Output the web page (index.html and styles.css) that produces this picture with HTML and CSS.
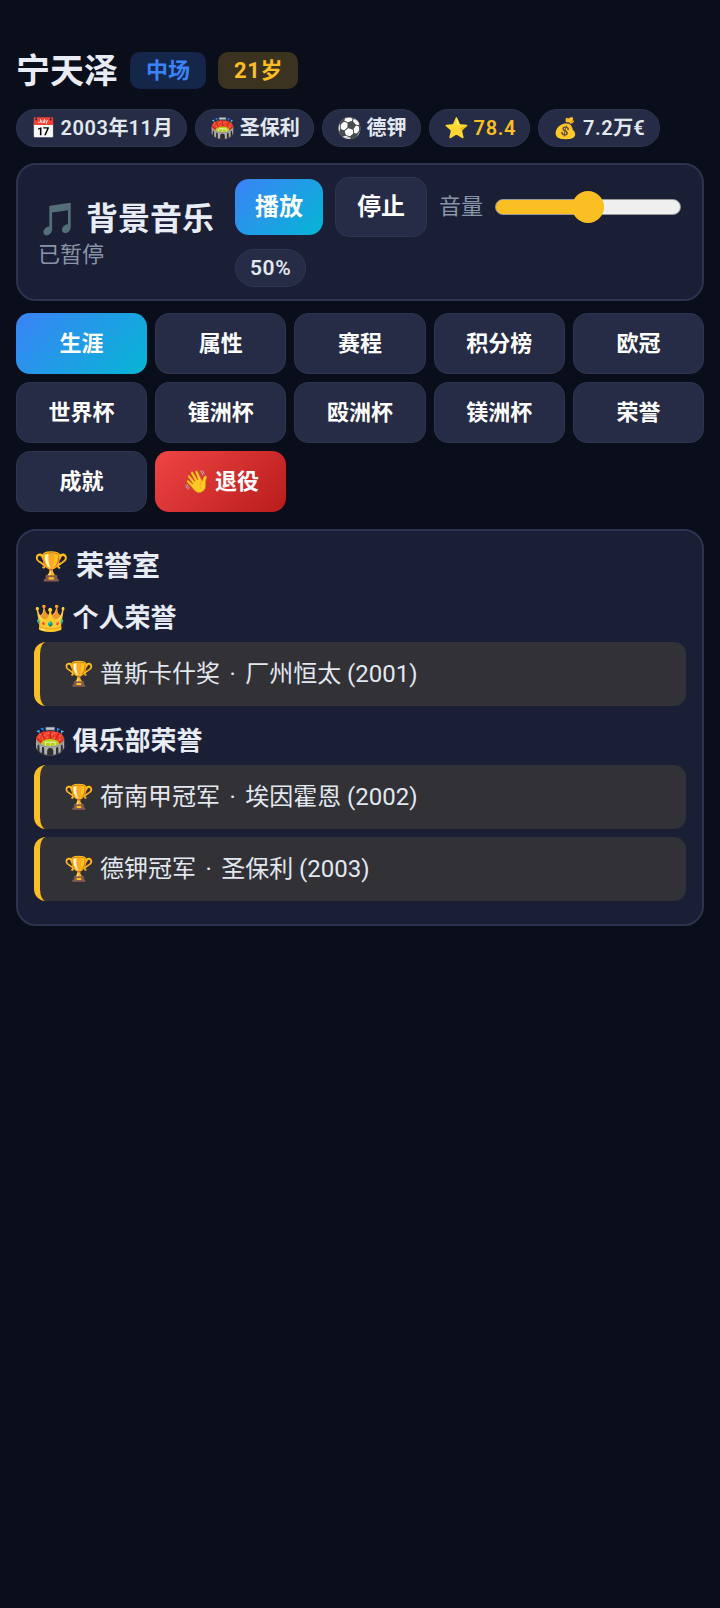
FILE: index.html
```html
<!DOCTYPE html>
<html lang="zh-CN">
<head>
    <meta charset="UTF-8">
    <meta name="viewport" content="width=device-width, initial-scale=1.0">
    <title>宁天泽</title>
    <link rel="stylesheet" href="styles.css">
</head>
<body>
    <div class="container">
        <!-- Player header -->
        <div class="player-head">
            <h1>宁天泽</h1>
            <span class="badge badge-blue">中场</span>
            <span class="badge badge-amber"><span class="num">21</span>岁</span>
        </div>
        <div class="chips">
            <span class="chip">📅 <span class="num">2003</span>年<span class="num">11</span>月</span>
            <span class="chip">🏟️ 圣保利</span>
            <span class="chip">⚽️ 德钾</span>
            <span class="chip">⭐ <b class="gold num">78.4</b></span>
            <span class="chip">💰 <span class="num">7.2</span>万<span class="num">€</span></span>
        </div>

        <!-- Music -->
        <div class="card music">
            <div class="music-info">
                <div class="music-title">🎵 背景音乐</div>
                <div class="music-state">已暂停</div>
            </div>
            <div class="music-controls">
                <button class="btn btn-play">播放</button>
                <button class="btn btn-stop">停止</button>
                <label class="volume">音量
                    <input type="range" min="0" max="100" value="50">
                </label>
                <span class="chip percent num">50%</span>
            </div>
        </div>

        <!-- Tabs -->
        <div class="tabs">
            <button class="tab active">生涯</button>
            <button class="tab">属性</button>
            <button class="tab">赛程</button>
            <button class="tab">积分榜</button>
            <button class="tab">欧冠</button>
            <button class="tab">世界杯</button>
            <button class="tab">锺洲杯</button>
            <button class="tab">殴洲杯</button>
            <button class="tab">镁洲杯</button>
            <button class="tab">荣誉</button>
            <button class="tab">成就</button>
            <button class="tab retire">👋 退役</button>
        </div>

        <!-- Honors -->
        <div class="card honors">
            <h2>🏆 荣誉室</h2>
            <h3>👑 个人荣誉</h3>
            <div class="honor">🏆 普斯卡什奖 <span class="sep">·</span> 厂州恒太 (2001)</div>
            <h3 class="club">🏟️ 俱乐部荣誉</h3>
            <div class="honor">🏆 荷南甲冠军 <span class="sep">·</span> 埃因霍恩 (2002)</div>
            <div class="honor">🏆 德钾冠军 <span class="sep">·</span> 圣保利 (2003)</div>
        </div>
    </div>
</body>
</html>
```

FILE: styles.css
```css
body {
    margin: 0;
    min-height: 1608px;
    background-color: #0a0e1a;
    color: #e8ecf5;
    font-family: 'Roboto', 'Noto Sans CJK SC', sans-serif;
}

.container {
    padding: 52px 16px 16px;
}

.player-head {
    display: flex;
    align-items: center;
    gap: 12px;
}

h1 {
    margin: 0;
    padding-top: 2px;
    font-size: 34px;
    line-height: 35px;
    font-weight: 700;
}

.badge {
    padding: 0 16px;
    height: 37px;
    line-height: 38px;
    border-radius: 10px;
    font-size: 22px;
    font-weight: 700;
}

.badge-blue {
    background-color: #14264a;
    color: #3b82f6;
}

.badge-amber {
    background-color: #3b3220;
    color: #fbbf24;
}

.chips {
    display: flex;
    gap: 8px;
    margin-top: 20px;
}

.chip {
    display: inline-block;
    padding: 0 13.5px;
    height: 36px;
    line-height: 36px;
    border: 1px solid #2f3550;
    border-radius: 20px;
    background-color: #262c45;
    font-size: 20px;
    font-weight: 600;
    color: #e2e8f0;
}

.num {
    letter-spacing: 0.6px;
}

.gold {
    color: #fbbf24;
    font-weight: 600;
}

.card {
    background-color: #1a1f35;
    border: 2px solid #2d3350;
    border-radius: 20px;
}

.music {
    display: flex;
    align-items: center;
    margin-top: 16px;
    padding: 12px 20px;
}

.music-info {
    flex: none;
    width: 197px;
    padding-top: 5px;
}

.music-title {
    font-size: 32px;
    line-height: 40px;
    font-weight: 700;
    white-space: nowrap;
}

.music-state {
    font-size: 22px;
    line-height: 32px;
    color: #8a94a8;
}

.music-controls {
    flex: 1;
    display: flex;
    flex-wrap: wrap;
    align-items: center;
    gap: 12px;
}

.btn {
    font-family: inherit;
    font-size: 24px;
    line-height: 1;
    font-weight: 700;
    color: #fff;
    border-radius: 14px;
}

.btn-play {
    width: 88px;
    height: 56px;
    border: none;
    background: linear-gradient(135deg, #3b82f6, #06b6d4);
}

.btn-stop {
    width: 92px;
    height: 60px;
    border: 1px solid #2f3550;
    background-color: #262c45;
}

.volume {
    display: flex;
    align-items: center;
    gap: 12px;
    font-size: 22px;
    line-height: 1;
    color: #8a94a8;
}

input[type="range"] {
    -webkit-appearance: none;
    appearance: none;
    width: 186px;
    height: 32px;
    margin: 0;
    background: transparent;
}

input[type="range"]::-webkit-slider-runnable-track {
    height: 16px;
    border: 1px solid #9a9a9a;
    border-radius: 8px;
    background: linear-gradient(to right, #fbbf24 50%, #efefef 50%);
}

input[type="range"]::-webkit-slider-thumb {
    -webkit-appearance: none;
    width: 32px;
    height: 32px;
    margin-top: -9px;
    border-radius: 50%;
    background-color: #fbbf24;
}

.percent {
    padding: 0 14px;
    font-size: 21px;
}

.tabs {
    display: grid;
    grid-template-columns: repeat(5, 1fr);
    gap: 8px;
    margin-top: 12px;
}

.tab {
    height: 61px;
    border: 1px solid #2f3550;
    border-radius: 14px;
    background-color: #262c45;
    color: #fff;
    font-family: inherit;
    font-size: 22px;
    line-height: 1;
    font-weight: 700;
}

.tab.active {
    border: none;
    background: linear-gradient(135deg, #3b82f6, #06b6d4);
}

.tab.retire {
    border: none;
    background: linear-gradient(135deg, #ef4444, #b91c1c);
}

.honors {
    margin-top: 17px;
    padding: 15px 16px 23px;
}

h2 {
    margin: 0;
    font-size: 28px;
    line-height: 42px;
}

h3 {
    margin: 11px 0 5px;
    font-size: 26px;
    line-height: 38px;
}

h3.club {
    margin-top: 16px;
}

.honor {
    margin-bottom: 8px;
    padding-left: 24px;
    height: 64px;
    line-height: 64px;
    border-left: 6px solid #fbbf24;
    border-radius: 12px;
    background-color: #323136;
    font-size: 24px;
    color: #e2e8f0;
}

.honor:last-child {
    margin-bottom: 0;
}

.sep {
    margin: 0 3.5px;
}
```
